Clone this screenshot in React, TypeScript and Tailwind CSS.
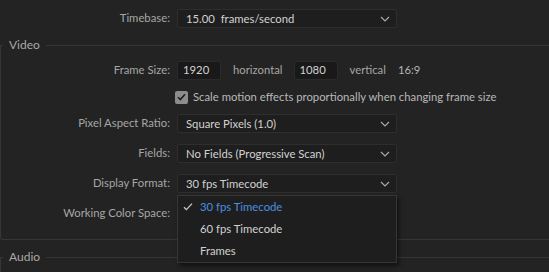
import React from 'react';

const font = { fontFamily: 'Lato, "Noto Sans", sans-serif' };

const Chevron = () => (
  <svg width="10" height="6" viewBox="0 0 10 6" fill="none" className="shrink-0">
    <path d="M1 1l4 4 4-4" stroke="#a8a8a8" strokeWidth="1.2" />
  </svg>
);

const Select: React.FC<{ value: string }> = ({ value }) => (
  <div className="flex h-[19px] w-[220px] items-center justify-between rounded-[2px] border border-[#2e2e2e] bg-[#1e1e1e] pl-[8px] pr-[6px] text-[#d2d2d2]">
    <span className="leading-none">{value}</span>
    <Chevron />
  </div>
);

const Row: React.FC<{ label: string; className?: string; children: React.ReactNode }> = ({ label, className, children }) => (
  <div className={`flex items-center ${className ?? ''}`}>
    <div className="w-[170px] shrink-0 text-right text-[#a6a6a6]">{label}</div>
    <div className="ml-[7px] flex items-center">{children}</div>
  </div>
);

const NumBox: React.FC<{ value: string }> = ({ value }) => (
  <div className="flex h-[19px] w-[44px] items-center rounded-[2px] border border-[#2a2a2a] bg-[#191919] pl-[5px] text-[#d2d2d2]">
    {value}
  </div>
);

export default function App() {
  return (
    <div className="relative h-[272px] w-full overflow-hidden bg-[#232323] text-[11.3px]" style={font}>
      <Row label="Timebase:" className="mt-[9px]">
        <Select value={'15.00\u00a0 frames/second'} />
      </Row>

      <fieldset className="mx-0 mt-[9px] rounded-bl-[3px] border border-r-0 border-[#363636] pb-[16px]">
        <legend className="ml-[2px] px-[6px] text-[12px] leading-[16px] text-[#a8a8a8]">Video</legend>

        <Row label="Frame Size:" className="-ml-px mt-[8px]">
          <NumBox value="1920" />
          <span className="ml-[12px] text-[#a6a6a6]">horizontal</span>
          <span className="ml-[11px]"><NumBox value="1080" /></span>
          <span className="ml-[12px] text-[#a6a6a6]">vertical</span>
          <span className="ml-[12px] text-[#b4b4b4]">16:9</span>
        </Row>

        <div className="-ml-px mt-[7px] flex h-[20px] items-center pl-[175px]">
          <div className="flex h-[13px] w-[13px] items-center justify-center rounded-[2px] bg-[#8c8c8c]">
            <svg width="9" height="8" viewBox="0 0 9 8" fill="none">
              <path d="M1 4.2l2.4 2.4L8 1.2" stroke="#1e1e1e" strokeWidth="1.6" />
            </svg>
          </div>
          <span className="ml-[5px] text-[#b8b8b8]">Scale motion effects proportionally when changing frame size</span>
        </div>

        <Row label="Pixel Aspect Ratio:" className="-ml-px mt-[7px]">
          <Select value="Square Pixels (1.0)" />
        </Row>
        <Row label="Fields:" className="-ml-px mt-[11px]">
          <Select value="No Fields (Progressive Scan)" />
        </Row>
        <Row label="Display Format:" className="-ml-px mt-[11px]">
          <Select value="30 fps Timecode" />
        </Row>
        <Row label="Working Color Space:" className="-ml-px mt-[11px]">
          <Select value="" />
        </Row>
      </fieldset>

      <fieldset className="mt-[9px] border-l border-t border-[#363636] pb-[20px]">
        <legend className="ml-[2px] px-[6px] text-[12px] leading-[16px] text-[#a8a8a8]">Audio</legend>
      </fieldset>

      <div className="absolute left-[177px] top-[195px] w-[220px] border border-[#363636] bg-[#1e1e1e] shadow-[2px_3px_4px_rgba(0,0,0,0.5)]">
        <div className="flex h-[22px] items-center text-[#4b8fe0]">
          <svg width="22" height="10" viewBox="0 0 22 10" fill="none" className="shrink-0">
            <path d="M6 5.2l2.4 2.4L14 1.6" stroke="#c8c8c8" strokeWidth="1.3" />
          </svg>
          <span>30 fps Timecode</span>
        </div>
        <div className="flex h-[22px] items-center pl-[22px] text-[#d2d2d2]">60 fps Timecode</div>
        <div className="flex h-[22px] items-center pl-[22px] text-[#d2d2d2]">Frames</div>
      </div>
    </div>
  );
}
